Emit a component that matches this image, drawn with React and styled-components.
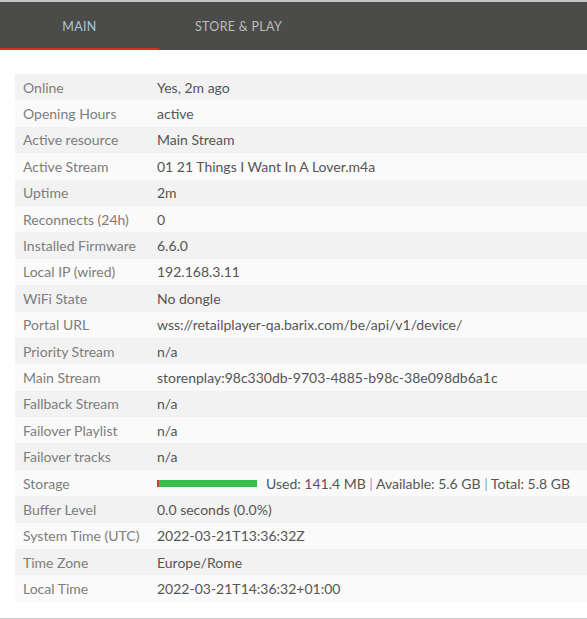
import React from 'react'
import styled, { createGlobalStyle } from 'styled-components'

const GlobalStyle = createGlobalStyle`
    html, body {
        margin:0;
        padding:0;
        background:#fff;
    }
    body {
        font-family:"Lato", "Open Sans", sans-serif;
        overflow:hidden;
    }
`

const rows = [
    ['Online', 'Yes, 2m ago'],
    ['Opening Hours', 'active'],
    ['Active resource', 'Main Stream'],
    ['Active Stream', '01 21 Things I Want In A Lover.m4a'],
    ['Uptime', '2m'],
    ['Reconnects (24h)', '0'],
    ['Installed Firmware', '6.6.0'],
    ['Local IP (wired)', '192.168.3.11'],
    ['WiFi State', 'No dongle'],
    ['Portal URL', 'wss://retailplayer-qa.barix.com/be/api/v1/device/'],
    ['Priority Stream', 'n/a'],
    ['Main Stream', 'storenplay:98c330db-9703-4885-b98c-38e098db6a1c'],
    ['Fallback Stream', 'n/a'],
    ['Failover Playlist', 'n/a'],
    ['Failover tracks', 'n/a'],
    ['Storage', 'storage'],
    ['Buffer Level', '0.0 seconds (0.0%)'],
    ['System Time (UTC)', '2022-03-21T13:36:32Z'],
    ['Time Zone', 'Europe/Rome'],
    ['Local Time', '2022-03-21T14:36:32+01:00'],
]

const Storage = () => {
    const used = 141.4
    const total = 5800
    return (
        <StorageBox>
            <Bar>
                <BarUsed style={{ width: Math.max(2, (used / total) * 100) + '%' }} />
            </Bar>
            <span>
                Used: 141.4 MB <Sep>|</Sep> Available: 5.6 GB <Sep>|</Sep> Total: 5.8 GB
            </span>
        </StorageBox>
    )
}

const App = () => {
    return (
        <>
            <GlobalStyle />
            <Page>
                <TabBar>
                    <Tab active>Main</Tab>
                    <Tab>Store &amp; Play</Tab>
                </TabBar>
                <Content>
                    <Table>
                        {rows.map(([label, value], i) => (
                            <Row key={label} odd={i % 2 === 0}>
                                <Label>{label}</Label>
                                <Value>{value === 'storage' ? <Storage /> : value}</Value>
                            </Row>
                        ))}
                    </Table>
                </Content>
            </Page>
        </>
    )
}

const Page = styled.div`
    width:100%;
    height:619px;
    border-bottom:1px solid #c9c9c9;
    box-sizing:border-box;
`
const TabBar = styled.div`
    display:flex;
    height:48px;
    background:#4b4b49;
    border-top:2px solid #c2c2c2;
`
const Tab = styled.div`
    width:159px;
    display:flex;
    align-items:center;
    justify-content:center;
    text-transform:uppercase;
    font-size:12.5px;
    letter-spacing:0.3px;
    color:${p => p.active ? '#a9c6dc' : '#bcbcbc'};
    border-bottom:2px solid ${p => p.active ? '#e0272c' : 'transparent'};
    padding-top:2px;
    box-sizing:border-box;
`
const Content = styled.div`
    padding:24px 0 0 15px;
`
const Table = styled.div`
    display:flex;
    flex-direction:column;
`
const Row = styled.div`
    display:grid;
    grid-template-columns:142px 1fr;
    height:26.4px;
    align-items:center;
    background:${p => p.odd ? '#f2f2f2' : '#fafafa'};
    font-size:14px;
`
const Label = styled.div`
    padding-left:8px;
    color:#7d7d7d;
    white-space:nowrap;
`
const Value = styled.div`
    color:#555;
    white-space:nowrap;
`
const StorageBox = styled.div`
    display:flex;
    align-items:center;
    gap:9px;
`
const Bar = styled.div`
    width:100px;
    height:7px;
    background:#3bbd4e;
    display:flex;
`
const BarUsed = styled.div`
    background:#d9343a;
    height:100%;
`
const Sep = styled.span`
    color:#7f9ecb;
`

export default App
